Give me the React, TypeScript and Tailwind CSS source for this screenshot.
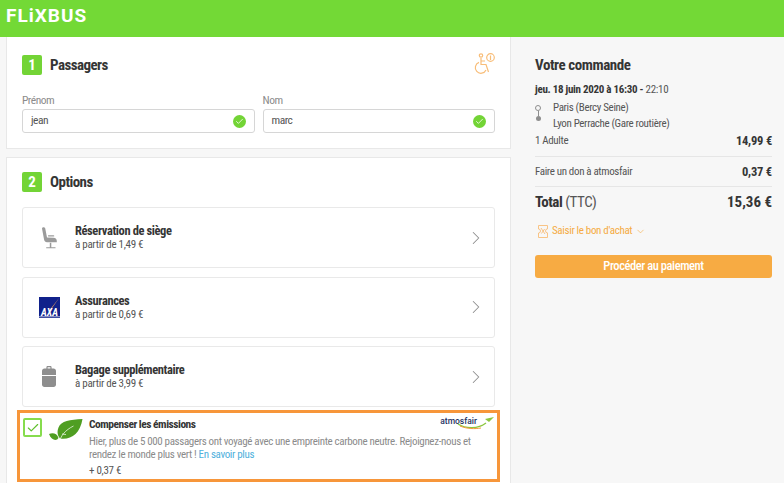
import { Check, ChevronDown, ChevronRight } from 'lucide-react';

const options = [
  { title: 'Réservation de siège', price: 'à partir de 1,49 €', icon: <SeatIcon /> },
  { title: 'Assurances', price: 'à partir de 0,69 €', icon: <AxaIcon /> },
  { title: 'Bagage supplémentaire', price: 'à partir de 3,99 €', icon: <BagIcon /> },
];

function SeatIcon() {
  return (
    <svg width="15" height="22" viewBox="0 0 15 22" fill="#9b9b9b">
      <path d="M0 1.500C0 .2 2.700-.3 3.200 1.200L5 10.400 L11.500 10.800C13.800 11 14.800 12 14.800 14L14.800 15.200 L5 15.200C3.400 15.200 2.500 14.400 2.100 12.800Z" />
      <path d="M6 8.200h5.500c1 0 1.200 1.300.2 1.300H6.200z" />
      <path d="M7.800 15.800h1.500v4.400h4.200v1.100H4.200v-1.100h3.600z" />
    </svg>
  );
}

function AxaIcon() {
  return (
    <svg width="21" height="21" viewBox="0 0 21 21">
      <rect width="21" height="21" fill="#10218b" />
      <path d="M20.500 0.500 L11 14 L10.200 13.400 Z" fill="#e8a05a" />
      <text x="10.500" y="18.500" textAnchor="middle" fontSize="10" fontWeight="700" fontStyle="italic" fill="#fff">AXA</text>
      <rect y="19.500" width="21" height="0.700" fill="#fff" />
    </svg>
  );
}

function BagIcon() {
  return (
    <svg width="14" height="21" viewBox="0 0 14 21" fill="#8e8e8e">
      <path d="M4.400 3V1.400C4.400.5 5 0 5.800 0h2.400c.8 0 1.400.5 1.400 1.400V3H8.400V1.200H5.600V3z" />
      <path d="M2.400 2.600h9.200c1.300 0 2.400 1 2.400 2.400v4H0V5c0-1.400 1.100-2.400 2.400-2.400z" />
      <path d="M0 10h14v8.600c0 1.400-1 2.400-2.400 2.400H2.400C1 21 0 20 0 18.600z" />
    </svg>
  );
}

function WheelchairIcon() {
  return (
    <svg width="21" height="22" viewBox="0 0 21 22" fill="none" stroke="#f8bd78" strokeWidth="1.200">
      <circle cx="7" cy="2.500" r="1.700" />
      <path d="M7 5v6.500h5l2.500 7.500M7 8h4" />
      <path d="M5 9.400a5.600 5.600 0 1 0 7 7.600" />
      <circle cx="16.500" cy="4.500" r="3.800" />
      <path d="M16.500 3v4M16.500 1.900v.5" />
    </svg>
  );
}

function VoucherIcon() {
  return (
    <svg width="10" height="13" viewBox="0 0 10 13" fill="none" stroke="#f8bd78" strokeWidth="0.900">
      <path d="M.5.500h9v3.400a2 2 0 0 0 0 4v4.600h-9V8a2 2 0 0 0 0-4z" />
      <path d="M3 3l4 6M3.400 8.500l3.200-4.500" />
    </svg>
  );
}

function LeafIcon() {
  return (
    <svg width="34" height="24" viewBox="0 0 34 24">
      <path d="M33.500 0C21 .5 12 2 9.500 8.500c-1.800 4.500-.8 8 1.500 11C22 21 31 15 33.500 0z" fill="#4f9e22" />
      <path d="M0 15c4-1.500 8-.5 9.500 4-2 3.500-7 2.500-9.500-4z" fill="#4f9e22" />
      <path d="M10.500 24c.5-7 6-13 14-17M13 15l4 .5" stroke="#fff" strokeWidth="0.700" fill="none" />
    </svg>
  );
}

function SwooshIcon() {
  return (
    <svg width="37" height="13" viewBox="0 0 37 13" fill="none">
      <path d="M1 7c8 5 20 5 28-1" stroke="#8cc63f" strokeWidth="1.400" />
      <path d="M3 9c7 3 15 3 21 2" stroke="#f59a3c" strokeWidth="1" />
      <path d="M28 2l9-2-5 5z" fill="#8cc63f" />
    </svg>
  );
}

function GreenCheck() {
  return (
    <div className="flex h-[13px] w-[13px] items-center justify-center rounded-full bg-[#73d436]">
      <Check className="h-[9px] w-[9px] text-white" strokeWidth={2} />
    </div>
  );
}

function SectionTitle({ n, title }: { n: number; title: string }) {
  return (
    <div className="flex h-5 items-center gap-2">
      <div className="flex h-5 w-5 items-center justify-center rounded-[2px] bg-[#73d436] text-[15px] font-bold text-white">{n}</div>
      <h2 className="text-[15px] font-bold tracking-[-0.55px] text-[#353535]">{title}</h2>
    </div>
  );
}

function Field({ label, value }: { label: string; value: string }) {
  return (
    <div className="flex-1">
      <div className="-mt-px h-[16px] text-[11.500px] leading-[15px] tracking-[-0.5px] text-[#8b8b8b]">{label}</div>
      <div className="flex h-[24px] items-center justify-between rounded-[3px] border border-[#d6d6d6] pl-2 pr-[8px] text-[11.500px] tracking-[-0.5px] text-[#555]">
        {value}
        <GreenCheck />
      </div>
    </div>
  );
}

export default function App() {
  return (
    <div className="h-[483px] w-[784px] overflow-hidden bg-[#f7f7f7] font-['Roboto',sans-serif] [font-stretch:75%]">
      <header className="flex h-[37px] items-center bg-[#73d936] pb-[6px] pl-[6px]">
        <span className="text-[19px] font-bold leading-none tracking-[1px] text-white [font-stretch:100%]">FLiXBUS</span>
      </header>

      <div className="flex">
        <main className="ml-[6px] w-[505px]">
          <section className="h-[112px] border-x border-b border-[#e8e8e8] bg-white px-[15px] pt-[18px]">
            <div className="flex items-start justify-between">
              <SectionTitle n={1} title="Passagers" />
              <div className="-mt-[2px]"><WheelchairIcon /></div>
            </div>
            <div className="mt-[19px] flex gap-2">
              <Field label="Prénom" value="jean" />
              <Field label="Nom" value="marc" />
            </div>
          </section>

          <section className="mt-2 h-[340px] border border-[#e8e8e8] bg-white px-[15px] pt-[14px]">
            <SectionTitle n={2} title="Options" />
            <div className="mt-[15px] flex flex-col gap-[8.500px]">
              {options.map((o) => (
                <div key={o.title} className="flex h-[61px] items-center rounded-[3px] border border-[#e9e9e9] pr-[7px]">
                  <div className="flex w-[52px] shrink-0 justify-center">{o.icon}</div>
                  <div className="flex-1">
                    <div className="text-[12.500px] font-bold leading-[15px] tracking-[-0.4px] text-[#353535]">{o.title}</div>
                    <div className="text-[11px] leading-[14px] tracking-[-0.28px] text-[#555]">{o.price}</div>
                  </div>
                  <ChevronRight className="h-[22px] w-[22px] text-[#8e8e8e]" strokeWidth={1.1} />
                </div>
              ))}
            </div>

            <div className="-mx-[5px] mt-[3px] flex h-[72px] border-[3px] border-[#f7963a] pl-[3px] pr-[3px]">
              <div className="mt-[5px] flex h-[19px] w-[19px] shrink-0 items-center justify-center rounded-[2px] border-2 border-[#86dc4e]">
                <Check className="h-[14px] w-[14px] text-[#5fc02c]" strokeWidth={2} />
              </div>
              <div className="ml-[7px] mt-[6px] shrink-0"><LeafIcon /></div>
              <div className="relative ml-[6px] min-w-0 flex-1 pt-[4px]">
                <div className="text-[11.500px] font-bold leading-[14px] tracking-[-0.5px] text-[#353535]">Compenser les émissions</div>
                <div className="absolute right-0 top-[3px] flex flex-col items-end">
                  <span className="pr-[17px] text-[8.500px] font-medium leading-[10px] text-[#22305f] [font-stretch:100%]">atmosfair</span>
                  <div className="-mt-[9px]"><SwooshIcon /></div>
                </div>
                <p className="mt-[4px] w-[392px] text-[11px] leading-[13px] tracking-[-0.35px] text-[#8b8b8b]">
                  Hier, plus de 5 000 passagers ont voyagé avec une empreinte carbone neutre. Rejoignez-nous et rendez le monde plus vert ! <span className="text-[#4fb0dc]">En savoir plus</span>
                </p>
                <div className="mt-[3px] text-[11px] leading-[14px] tracking-[-0.28px] text-[#555]">+ 0,37 €</div>
              </div>
            </div>
          </section>
        </main>

        <aside className="ml-[24px] mr-3 flex-1 pt-[19px]">
          <h2 className="text-[15px] font-bold leading-[18px] tracking-[-0.43px] text-[#353535]">Votre commande</h2>
          <div className="mt-[8px] text-[11px] leading-[15px] tracking-[-0.28px] text-[#555]">
            <b className="text-[#353535]">jeu. 18 juin 2020 à 16:30 - </b>22:10
          </div>
          <div className="mt-[3px] flex">
            <div className="flex w-[6px] flex-col items-center pt-[5px]">
              <div className="h-[6px] w-[6px] rounded-full border border-[#8e8e8e]" />
              <div className="h-[5px] w-px bg-[#8e8e8e]" />
              <div className="h-[5px] w-[5px] rounded-full bg-[#8e8e8e]" />
            </div>
            <div className="ml-[12px] text-[11px] leading-[16px] tracking-[-0.35px] text-[#555]">
              <div>Paris (Bercy Seine)</div>
              <div>Lyon Perrache (Gare routière)</div>
            </div>
          </div>
          <div className="mt-[1px] flex h-[16px] items-center justify-between text-[11px] tracking-[-0.35px] text-[#555]">
            <span>1 Adulte</span>
            <b className="text-[12.500px] tracking-[-0.2px] text-[#353535]">14,99 €</b>
          </div>
          <div className="mt-[7px] h-px bg-[#e6e6e6]" />
          <div className="mt-[8px] flex h-[15px] items-center justify-between text-[11px] tracking-[-0.35px] text-[#555]">
            <span>Faire un don à atmosfair</span>
            <b className="text-[12.500px] tracking-[-0.2px] text-[#353535]">0,37 €</b>
          </div>
          <div className="mt-[6px] h-px bg-[#e6e6e6]" />
          <div className="mt-[6px] flex h-[18px] items-center justify-between text-[15px] text-[#555]">
            <span className="tracking-[-0.45px]"><b className="text-[#353535]">Total</b> (TTC)</span>
            <b className="text-[#353535]">15,36 €</b>
          </div>
          <div className="mt-[12px] flex h-[17px] items-center pl-[3px] text-[11px] tracking-[-0.33px] text-[#f5ab43]">
            <VoucherIcon />
            <span className="ml-[4px]">Saisir le bon d'achat</span>
            <ChevronDown className="ml-[3px] h-[11px] w-[11px]" strokeWidth={1.3} />
          </div>
          <button className="mt-[15px] h-[23px] w-full rounded-[3px] bg-[#f7ab43] text-[12.500px] font-medium tracking-[-0.43px] text-white">Procéder au paiement</button>
        </aside>
      </div>
    </div>
  );
}
